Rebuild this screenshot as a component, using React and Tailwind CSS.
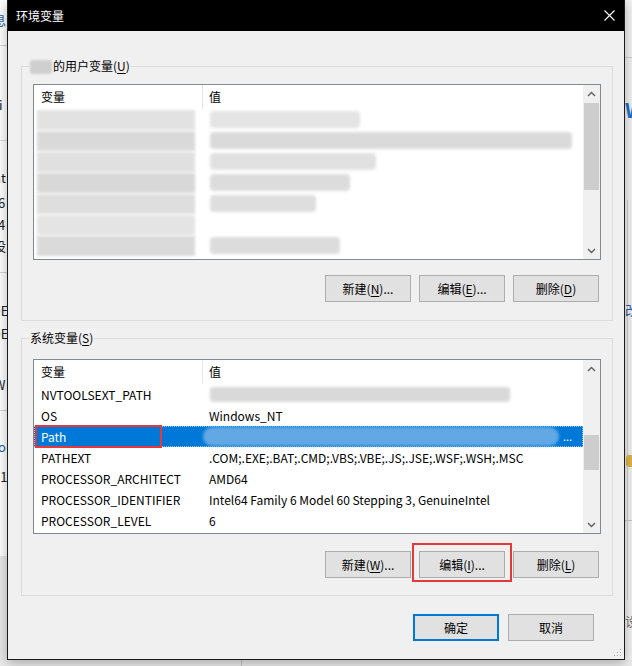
import React from 'react';

const sysRows = [
  { name: 'NVTOOLSEXT_PATH', value: null, kind: 'blur' },
  { name: 'OS', value: 'Windows_NT' },
  { name: 'Path', value: null, kind: 'selected' },
  { name: 'PATHEXT', value: '.COM;.EXE;.BAT;.CMD;.VBS;.VBE;.JS;.JSE;.WSF;.WSH;.MSC' },
  { name: 'PROCESSOR_ARCHITECT', value: 'AMD64' },
  { name: 'PROCESSOR_IDENTIFIER', value: 'Intel64 Family 6 Model 60 Stepping 3, GenuineIntel' },
  { name: 'PROCESSOR_LEVEL', value: '6' },
];

// redacted user rows: [col1 shade, col2 width class, col2 shade]
const userRows = [
  ['bg-[#e2e2e2]', 'w-[150px]', 'bg-[#e4e4e4]'],
  ['bg-[#d9d9d9]', 'w-[362px]', 'bg-[#dadada]'],
  ['bg-[#e0e0e0]', 'w-[166px]', 'bg-[#e1e1e1]'],
  ['bg-[#d8d8d8]', 'w-[140px]', 'bg-[#dcdcdc]'],
  ['bg-[#dedede]', 'w-[106px]', 'bg-[#dedede]'],
  ['bg-[#e4e4e4]', 'w-[0px]', 'bg-[#ffffff]'],
  ['bg-[#dadada]', 'w-[130px]', 'bg-[#dcdcdc]'],
];

function Chevron({ up }) {
  return (
    <svg width="9" height="6" viewBox="0 0 9 6">
      <path
        d={up ? 'M1 5 L4.5 1.5 L8 5' : 'M1 1 L4.5 4.5 L8 1'}
        fill="none"
        stroke="#606060"
        strokeWidth="1.4"
      />
    </svg>
  );
}

function ScrollBar({ thumb }) {
  return (
    <div className="w-[17px] h-full bg-[#f0f0f0] flex flex-col">
      <div className="h-[17px] flex items-center justify-center">
        <Chevron up />
      </div>
      <div className="flex-1 px-[1px]">
        <div className={`bg-[#cdcdcd] ${thumb}`} />
      </div>
      <div className="h-[17px] flex items-center justify-center">
        <Chevron />
      </div>
    </div>
  );
}

function Header() {
  return (
    <div className="h-[24px] flex items-center">
      <div className="w-[169px] h-full pl-[7px] flex items-center border-r border-[#e5e5e5]">变量</div>
      <div className="pl-[6px]">值</div>
    </div>
  );
}

function Btn({ children, primary }) {
  return (
    <button
      className={`w-[86px] h-[27px] flex items-center justify-center bg-[#e1e1e1] text-[12px] text-black ${
        primary ? 'border-2 border-[#0078d7]' : 'border border-[#adadad]'
      }`}
    >
      {children}
    </button>
  );
}

function Mn({ children }) {
  return <span className="underline underline-offset-[2px]">{children}</span>;
}

function Backdrop() {
  return (
    <div className="absolute inset-0 text-[13px] leading-none">
      {/* left window strip */}
      <div className="absolute left-0 top-0 w-[8px] h-[556px] bg-white" />
      <div className="absolute left-0 top-[556px] w-[8px] h-[110px] bg-[#e9e9e9]" />
      <div className="absolute left-0 top-[45px] w-[8px] h-px bg-[#d6d6d6]" />
      <div className="absolute left-0 top-[140px] w-[8px] h-px bg-[#dedede]" />
      <div className="absolute left-0 top-[272px] w-[8px] h-px bg-[#d6d6d6]" />
      <div className="absolute left-0 top-[410px] w-[8px] h-px bg-[#d6d6d6]" />
      <span className="absolute left-[-7px] top-[13px] text-[#1f5fae]">息</span>
      <span className="absolute left-[-6px] top-[98px] text-[#222]">ti</span>
      <span className="absolute left-[-7px] top-[171px] text-[#222]">nt</span>
      <span className="absolute left-[-2px] top-[196px] text-[#222]">6</span>
      <span className="absolute left-[-2px] top-[218px] text-[#222]">4</span>
      <span className="absolute left-[-7px] top-[239px] text-[#222]">设</span>
      <span className="absolute left-[-9px] top-[304px] text-[#222]">OE</span>
      <span className="absolute left-[-9px] top-[327px] text-[#222]">OE</span>
      <span className="absolute left-[-6px] top-[378px] text-[#222]">W</span>
      <span className="absolute left-[-7px] top-[440px] text-[#1f5fae]">ro</span>
      <span className="absolute left-[-7px] top-[470px] text-[#222]">01</span>
      {/* right window strip */}
      <div className="absolute right-0 top-0 w-[8px] h-[666px] bg-[#f3f3f3]" />
      <div className="absolute right-0 top-[57px] w-[8px] h-px bg-[#d0d0d0]" />
      <div className="absolute right-0 top-[520px] w-[8px] h-px bg-[#c8c8c8]" />
      <div className="absolute right-[4px] top-[200px] w-px h-[400px] bg-[#d4d4d4]" />
      <span className="absolute left-[625px] top-[100px] text-[20px] font-bold text-[#1a73c9]">W</span>
      <span className="absolute left-[625px] top-[303px] text-[#1f5fae]">改</span>
      <span className="absolute left-[626px] top-[455px] w-[8px] h-[12px] rounded-[3px] bg-[#e0b54a]" />
      <span className="absolute left-[625px] top-[614px] text-[#777]">设</span>
      {/* below dialog */}
      <div className="absolute left-0 top-[660px] w-[632px] h-[6px] bg-[#ececec]" />
      <div className="absolute left-[241px] top-[660px] w-px h-[6px] bg-[#c9c9c9]" />
    </div>
  );
}

export default function App() {
  return (
    <div className="relative w-[632px] h-[666px] overflow-hidden bg-white font-['Noto_Sans_CJK_SC','Noto_Sans',sans-serif] text-[12px] text-black">
      <Backdrop />

      <div className="absolute left-[7px] top-0 w-[618px] h-[660px] flex flex-col bg-[#f0f0f0] border border-t-0 border-[#1b1b1b] shadow-[0_3px_12px_rgba(0,0,0,0.3)]">
        {/* title bar */}
        <div className="h-[31px] shrink-0 bg-black flex items-center justify-between pl-[8px] pr-[9px] text-white text-[12px]">
          <span>环境变量</span>
          <svg width="11" height="11" viewBox="0 0 11 11">
            <path d="M0.5 0.5 L10.5 10.5 M10.5 0.5 L0.5 10.5" stroke="#ffffff" strokeWidth="1.1" />
          </svg>
        </div>

        {/* user variables */}
        <fieldset className="mt-[27px] ml-[13px] w-[592px] border border-[#dcdcdc]">
          <legend className="ml-[7px] px-[1px] leading-[16px] text-[12px]">
            <span className="inline-block w-[22px] h-[14px] mr-[1px] align-[-3px] rounded-[3px] bg-[#cfcfcf] blur-[1px]" />
            的用户变量(<Mn>U</Mn>)
          </legend>
          <div className="pt-[10px] pl-[11px] pr-[10px] pb-[18px]">
            <div className="w-[568px] h-[176px] border border-[#828790] bg-white flex">
              <div className="flex-1 flex flex-col">
                <Header />
                {userRows.map(([c1, w2, c2], i) => (
                  <div key={i} className="h-[21px] flex items-center">
                    <div className="w-[169px] h-full pl-[3px] pr-[8px] flex items-center">
                      <div className={`h-[20px] flex-1 blur-[1.5px] ${c1}`} />
                    </div>
                    <div className="pl-[7px] h-full flex items-center">
                      <div className={`h-[17px] rounded-[4px] blur-[1.5px] ${w2} ${c2}`} />
                    </div>
                  </div>
                ))}
              </div>
              <ScrollBar thumb="mt-[1px] h-[87px]" />
            </div>
            <div className="mt-[15px] pr-[3px] flex justify-end gap-[8px]">
              <Btn>新建(<Mn>N</Mn>)...</Btn>
              <Btn>编辑(<Mn>E</Mn>)...</Btn>
              <Btn>删除(<Mn>D</Mn>)</Btn>
            </div>
          </div>
        </fieldset>

        {/* system variables */}
        <fieldset className="mt-[9px] ml-[13px] w-[592px] border border-[#dcdcdc]">
          <legend className="ml-[7px] px-[1px] leading-[16px] text-[12px]">
            系统变量(<Mn>S</Mn>)
          </legend>
          <div className="pt-[13px] pl-[11px] pr-[10px] pb-[17px]">
            <div className="w-[568px] h-[175px] border border-[#828790] bg-white flex overflow-hidden">
              <div className="flex-1 flex flex-col">
                <Header />
                {sysRows.map((r) => (
                  <div
                    key={r.name}
                    className={`relative h-[21px] shrink-0 flex items-center whitespace-nowrap ${
                      r.kind === 'selected'
                        ? 'bg-[#0078d7] text-white outline-1 outline-dotted outline-[#8fc3ee] -outline-offset-1'
                        : ''
                    }`}
                  >
                    <div className="w-[169px] pl-[7px]">{r.name}</div>
                    {r.kind === 'blur' && (
                      <div className="ml-[7px] w-[300px] h-[15px] rounded-[3px] bg-[#d9d9d9] blur-[1.5px]" />
                    )}
                    {r.kind === 'selected' && (
                      <div className="flex items-center">
                        <div className="w-[356px] h-[19px] rounded-full bg-[#62a8e4] blur-[1.5px]" />
                        <span className="ml-[4px] text-[11px] leading-none">...</span>
                      </div>
                    )}
                    {!r.kind && <div className="pl-[6px]">{r.value}</div>}
                    {r.kind === 'selected' && (
                      <div className="absolute left-[1px] top-[-1px] w-[127px] h-[23px] border-2 border-[#e5383b]" />
                    )}
                  </div>
                ))}
              </div>
              <ScrollBar thumb="mt-[58px] h-[35px]" />
            </div>
            <div className="mt-[17px] pr-[3px] flex justify-end gap-[8px]">
              <Btn>新建(<Mn>W</Mn>)...</Btn>
              <div className="relative">
                <Btn>编辑(<Mn>I</Mn>)...</Btn>
                <div className="absolute left-[-7px] right-[-7px] top-[-8px] bottom-[-4px] border-2 border-[#e5383b]" />
              </div>
              <Btn>删除(<Mn>L</Mn>)</Btn>
            </div>
          </div>
        </fieldset>

        {/* dialog buttons */}
        <div className="mt-[18px] ml-[13px] w-[592px] pr-[19px] flex justify-end gap-[9px]">
          <Btn primary>确定</Btn>
          <Btn>取消</Btn>
        </div>

        <div className="mt-auto self-end mr-[2px] mb-[2px]">
          <svg width="8" height="8" viewBox="0 0 8 8">
            <rect x="6" y="0" width="1" height="1" fill="#a8a8a8" />
            <rect x="3" y="3" width="1" height="1" fill="#a8a8a8" />
            <rect x="6" y="3" width="1" height="1" fill="#a8a8a8" />
            <rect x="0" y="6" width="1" height="1" fill="#a8a8a8" />
            <rect x="3" y="6" width="1" height="1" fill="#a8a8a8" />
            <rect x="6" y="6" width="1" height="1" fill="#a8a8a8" />
          </svg>
        </div>
      </div>
    </div>
  );
}
